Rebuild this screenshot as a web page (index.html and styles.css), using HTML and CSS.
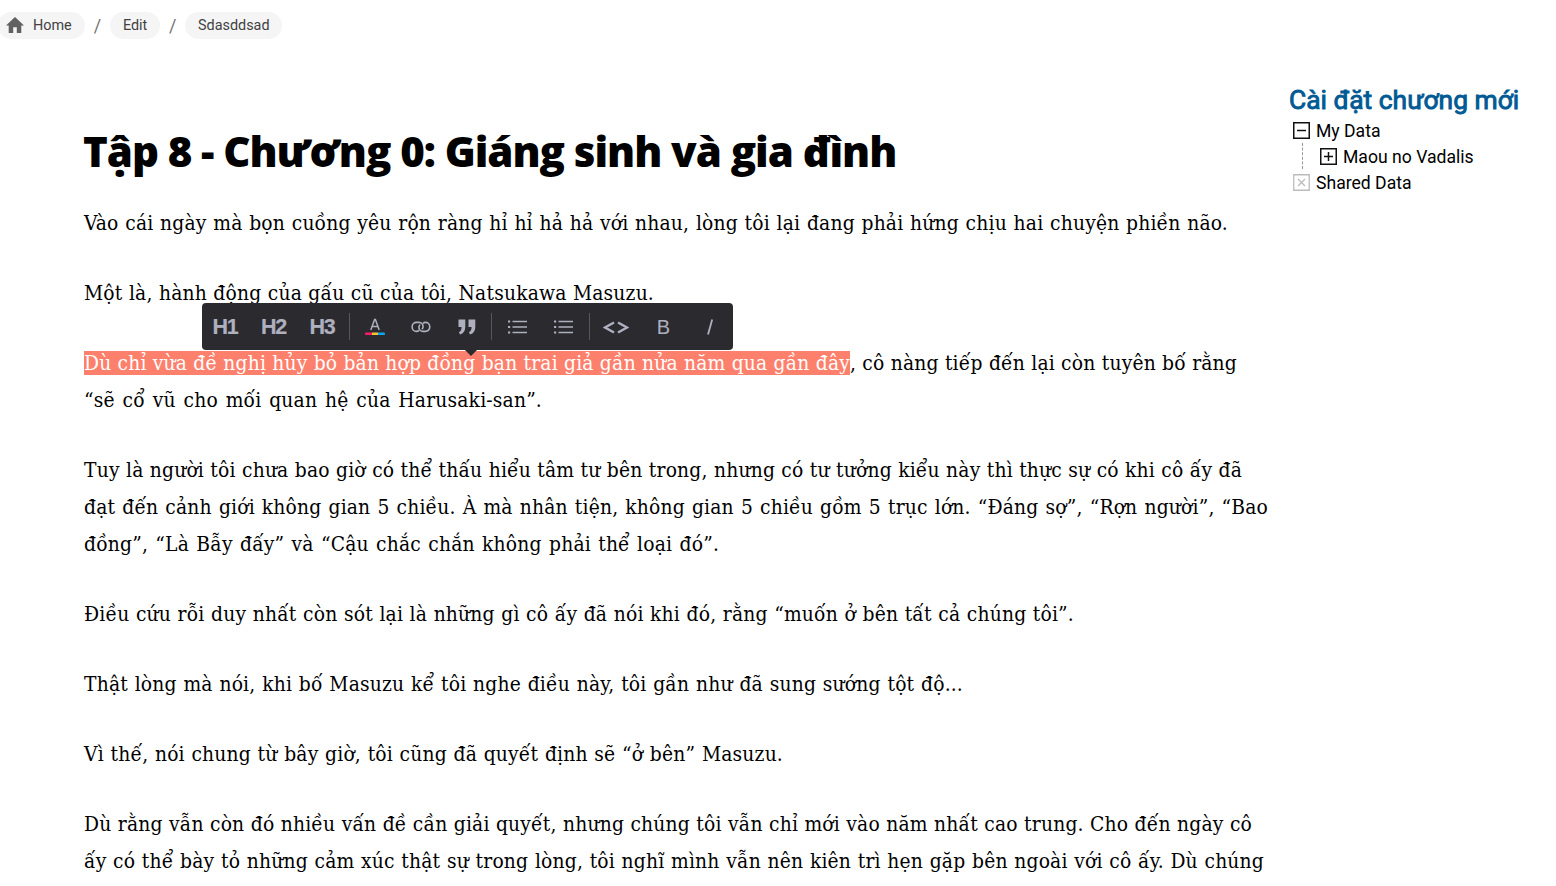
FILE: index.html
```
<!DOCTYPE html>
<html lang="vi">
<head>
<meta charset="utf-8">
<title>Cài đặt chương mới</title>
<link rel="stylesheet" href="styles.css">
</head>
<body>
<nav class="crumbs">
  <a class="crumb crumb-home"><svg class="home" viewBox="2 3 20 17" preserveAspectRatio="none"><path d="M10 20v-6h4v6h5v-8h3L12 3 2 12h3v8z"/></svg>Home</a>
  <span class="slash">/</span>
  <a class="crumb">Edit</a>
  <span class="slash">/</span>
  <a class="crumb">Sdasddsad</a>
</nav>
<div class="page">
  <article class="article">
    <h1 class="title">Tập 8 - Chương 0: Giáng sinh và gia đình</h1>
    <p><span class="line" style="width:1144px">Vào cái ngày mà bọn cuồng yêu rộn ràng hỉ hỉ hả hả với nhau, lòng tôi lại đang phải hứng chịu hai chuyện phiền não.</span></p>
    <p><span class="line" style="width:570px">Một là, hành động của gấu cũ của tôi, Natsukawa Masuzu.</span></p>
    <p class="has-toolbar"><span class="pair"><mark class="line selected" style="width:766px">Dù chỉ vừa đề nghị hủy bỏ bản hợp đồng bạn trai giả gần nửa năm qua gần đây</mark><span class="line" style="width:387px">, cô nàng tiếp đến lại còn tuyên bố rằng</span></span>
      <span class="line" style="width:458px">“sẽ cổ vũ cho mối quan hệ của Harusaki-san”.</span>
      <span class="toolbar">
        <b class="tool heading">H1</b><b class="tool heading">H2</b><b class="tool heading">H3</b>
        <i class="sep"></i>
        <span class="tool"><svg width="20" height="18" viewBox="0 0 20 18"><path d="M5.800 12 9.600 1.500h.8L14.200 12M7 8.600h6" fill="none" stroke="#aeb0bf" stroke-width="1.500"/><path d="M1 14.500h6v2.500H1a1.200 1.200 0 0 1 0-2.500z" fill="#f81d63"/><path d="M7 14.500h6v2.500H7z" fill="#f5c32f"/><path d="M13 14.500h6a1.200 1.200 0 0 1 0 2.500h-6z" fill="#0da5ee"/></svg></span>
        <span class="tool"><svg width="20" height="12" viewBox="0 0 20 12" fill="none" stroke="#aeb0bf" stroke-width="1.600"><path d="M8 9.400c-.7.7-1.500 1-2.600 1A4.200 4.200 0 0 1 1.200 6.200V5.500a4.200 4.200 0 0 1 4.200-4.100H8a4.200 4.200 0 0 1 4.100 4.100c0 1.100-.5 2.100-1.300 2.700"/><path d="M12 2.400c.6-.6 1.500-1 2.500-1a4.200 4.200 0 0 1 4.200 4.100v.7a4.200 4.200 0 0 1-4.200 4.200H12a4.200 4.200 0 0 1-4.100-4.200c0-1.100.5-2 1.300-2.600"/></svg></span>
        <span class="tool"><svg width="18" height="16" viewBox="0 0 18 16"><path d="M.5.5h6.800v7.200c0 4-1.700 6.800-5.300 7.800L.9 13.100c1.800-.9 2.700-2.500 2.700-5.200H.5zM10.500.5h6.800v7.200c0 4-1.700 6.800-5.300 7.800l-1.100-2.400c1.800-.9 2.700-2.500 2.700-5.200h-3.100z" fill="#aeb0bf"/></svg></span>
        <i class="sep"></i>
        <span class="tool"><svg width="20" height="16" viewBox="0 0 20 16" stroke="#aeb0bf"><path d="M5.500 2.500H20M5.500 8H20M5.500 13.500H20" stroke-width="1.300"/><path d="M1 2.500h2.200M1 8h2.200M1 13.500h2.200" stroke-width="2.200"/></svg></span>
        <span class="tool"><svg width="20" height="16" viewBox="0 0 20 16" stroke="#aeb0bf"><path d="M5.500 2.500H20M5.500 8H20M5.500 13.500H20" stroke-width="1.300"/><path d="M1 2.500h2.200M1 8h2.200M1 13.500h2.200" stroke-width="2.200"/></svg></span>
        <i class="sep"></i>
        <span class="tool"><svg width="26" height="14" viewBox="0 0 26 14" fill="none" stroke="#aeb0bf" stroke-width="2.500"><path d="M11 2.500 2 7.500l9 5M15 2.500l9 5-9 5"/></svg></span>
        <span class="tool letter">B</span>
        <span class="tool"><svg width="8" height="16" viewBox="0 0 8 16"><path d="M6.200.5 2 15.500" stroke="#aeb0bf" stroke-width="1.800"/></svg></span>
      </span>
    </p>
    <p><span class="line" style="width:1158px">Tuy là người tôi chưa bao giờ có thể thấu hiểu tâm tư bên trong, nhưng có tư tưởng kiểu này thì thực sự có khi cô ấy đã</span>
      <span class="line" style="width:1184px">đạt đến cảnh giới không gian 5 chiều. À mà nhân tiện, không gian 5 chiều gồm 5 trục lớn. “Đáng sợ”, “Rợn người”, “Bao</span>
      <span class="line" style="width:635px">đồng”, “Là Bẫy đấy” và “Cậu chắc chắn không phải thể loại đó”.</span></p>
    <p><span class="line" style="width:990px">Điều cứu rỗi duy nhất còn sót lại là những gì cô ấy đã nói khi đó, rằng “muốn ở bên tất cả chúng tôi”.</span></p>
    <p><span class="line" style="width:879px">Thật lòng mà nói, khi bố Masuzu kể tôi nghe điều này, tôi gần như đã sung sướng tột độ...</span></p>
    <p><span class="line" style="width:699px">Vì thế, nói chung từ bây giờ, tôi cũng đã quyết định sẽ “ở bên” Masuzu.</span></p>
    <p><span class="line" style="width:1168px">Dù rằng vẫn còn đó nhiều vấn đề cần giải quyết, nhưng chúng tôi vẫn chỉ mới vào năm nhất cao trung. Cho đến ngày cô</span>
      <span class="line" style="width:1180px">ấy có thể bày tỏ những cảm xúc thật sự trong lòng, tôi nghĩ mình vẫn nên kiên trì hẹn gặp bên ngoài với cô ấy. Dù chúng</span></p>
  </article>
  <aside class="side">
    <h2 class="side-title">Cài đặt chương mới</h2>
    <div class="node"><svg class="box" viewBox="0 0 17 17"><path d="M.75.75h15.500v15.500H.75zM4 8.500h9"/></svg><span class="label">My Data</span></div>
    <div class="branch"><div class="node"><svg class="box" viewBox="0 0 17 17"><path d="M.75.75h15.500v15.500H.75zM4 8.500h9M8.500 4v9"/></svg><span class="label">Maou no Vadalis</span></div></div>
    <div class="node"><svg class="box off" viewBox="0 0 17 17"><path d="M.75.75h15.500v15.500H.75zM5 5l7 7M12 5l-7 7"/></svg><span class="label">Shared Data</span></div>
  </aside>
</div>
</body>
</html>
```
FILE: styles.css
```
* { box-sizing: border-box; }
body { margin: 0; height: 886px; overflow: hidden; background: #fff; color: #000; font-family: Roboto, sans-serif; display: flex; flex-direction: column; }
.crumbs { display: flex; align-items: center; height: 27px; margin: 12px 0 0 -2px; flex: none; font-size: 14.4px; color: #424242; }
.crumb { height: 27px; line-height: 27px; padding: 0 12.900px; border-radius: 14px; background: #f5f5f5; }
.crumb-home { display: flex; align-items: center; width: 87px; padding: 0 0 0 9px; }
.home { width: 18px; height: 16px; margin: 0 9px 1px -1px; fill: #616161; }
.slash { width: 25px; text-align: center; font-size: 18px; color: #757575; }
.page { display: flex; flex: none; }
.article { width: 1205px; margin-left: 84px; flex: none; }
.title { margin: 0 0 0 -1px; padding-top: 82px; height: 165px; font: 800 42px/60px "Open Sans", sans-serif; letter-spacing: -1.050px; white-space: nowrap; }
.article p { margin: 0 0 33px; font: 20.800px/37px "DejaVu Serif Condensed", "DejaVu Serif", serif; letter-spacing: .18px; }
.line { display: block; height: 37px; line-height: 38px; white-space: nowrap; text-align: justify; text-align-last: justify; }
.pair { display: flex; align-items: center; height: 37px; }
.selected { height: 24px; line-height: 24px; background: #fd806c; color: #fff; }
.has-toolbar { position: relative; }
.toolbar { position: absolute; left: 118px; top: -41px; width: 531px; height: 47px; display: grid; grid-template-columns: 46px 51px 46px 8px 44px 48px 44px 5px 45px 48px 5px 48px 47px 46px; align-items: center; background: #2a2a2f; border-radius: 4px; letter-spacing: 0; }
.toolbar::after { content: ""; position: absolute; left: 263px; top: 47px; border: solid transparent; border-width: 6px 6px 0; border-top-color: #2a2a2f; }
.tool { display: flex; align-items: center; justify-content: center; height: 47px; color: #aeb0bf; }
.tool svg { display: block; }
.heading { font: bold 21.500px/47px "Liberation Sans", sans-serif; letter-spacing: -1.200px; padding-top: 2px; -webkit-text-stroke: .2px #aeb0bf; }
.letter { font: 20px/47px "Liberation Sans", sans-serif; padding-top: 2px; }
.sep { justify-self: center; width: 1px; height: 27px; background: #56565d; }
.side { padding-top: 44px; }
.side-title { margin: 0; font-size: 26.400px; line-height: 34px; font-weight: 400; -webkit-text-stroke: .9px #015a94; color: #015a94; white-space: nowrap; }
.node { display: flex; align-items: center; height: 26px; padding-left: 4px; font-size: 17.600px; white-space: nowrap; }
.label { padding-top: 2px; }
.box { width: 17px; height: 17px; margin-right: 6px; fill: none; stroke: #111; stroke-width: 1.500; }
.off { stroke: #bbb; stroke-width: 1.300; }
.branch { margin-left: 13px; padding-left: 13px; border-left: 1px dashed #999; }
```
